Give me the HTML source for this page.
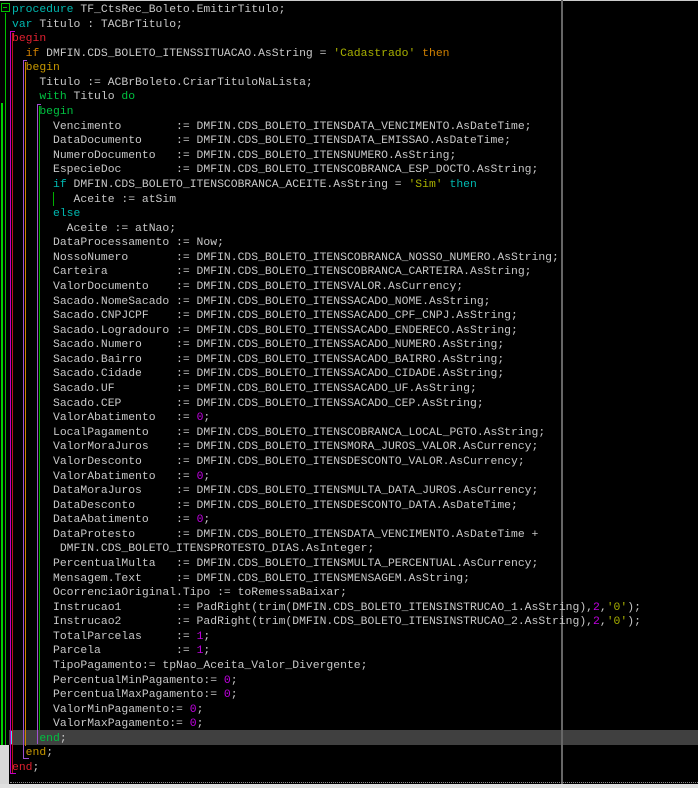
<!DOCTYPE html>
<html><head><meta charset="utf-8"><style>
html,body{margin:0;padding:0;background:#000;width:698px;height:788px;overflow:hidden;position:relative}
pre{position:absolute;left:12px;top:3px;margin:0;font-family:"Liberation Mono","Courier New",monospace;font-size:11.4px;line-height:14.58px;color:#c8c8c8;white-space:pre}
.k{color:#00b8b0}.r{color:#e02030}.o{color:#d08000}.y{color:#c89800}.g{color:#00c040}
.s{color:#a8b000}.n{color:#c000e0}
.v{position:absolute;width:1px}
</style></head><body>
<div style="position:absolute;left:0;top:0;width:698px;height:1px;background:#ccc"></div>
<div style="position:absolute;left:9px;top:730px;width:689px;height:15px;background:#404040"></div>
<div style="position:absolute;left:10px;top:731px;width:2px;height:13px;background:#40e0f0"></div>
<div style="position:absolute;left:561px;top:0;width:2px;height:784px;background:#666"></div>
<div style="position:absolute;left:0;top:745px;width:9px;height:40px;background:#d8d8d8"></div>
<div style="position:absolute;left:0;top:784px;width:698px;height:4px;background:#e0e0e0"></div>
<div style="position:absolute;left:10px;top:782px;width:688px;height:1px;border-top:1px dotted #888"></div>
<div style="position:absolute;left:1px;top:3px;width:7px;height:7px;border:1px solid #00c000"></div>
<div style="position:absolute;left:3px;top:7px;width:4px;height:1px;background:#00c000"></div>
<div class="v" style="left:5px;top:13px;height:732px;background:#00c000"></div>
<div class="v" style="left:1px;top:103px;height:642px;background:#00d000;width:2px"></div>
<div class="v" style="left:10px;top:31px;height:742px;background:#c000c0"></div>
<div style="position:absolute;left:10px;top:31px;width:5px;height:1px;background:#c000c0"></div>
<div style="position:absolute;left:10px;top:773px;width:6px;height:1px;background:#c000c0"></div>
<div class="v" style="left:12px;top:33px;height:740px;background:#c01020"></div>
<div class="v" style="left:23px;top:60px;height:698px;background:#a050d0"></div>
<div style="position:absolute;left:23px;top:60px;width:4px;height:1px;background:#a050d0"></div>
<div style="position:absolute;left:23px;top:758px;width:6px;height:1px;background:#a050d0"></div>
<div class="v" style="left:25px;top:62px;height:684px;background:#d08000"></div>
<div class="v" style="left:37px;top:104px;height:640px;background:#a050d0"></div>
<div style="position:absolute;left:37px;top:104px;width:4px;height:1px;background:#a050d0"></div>
<div class="v" style="left:39px;top:106px;height:624px;background:#00b000"></div>
<div class="v" style="left:53px;top:192px;height:14px;background:#00b000"></div>
<pre><span class="k">procedure</span> TF_CtsRec_Boleto.EmitirTitulo;
<span class="k">var</span> Titulo : TACBrTitulo;
<span class="r">begin</span>
  <span class="o">if</span> DMFIN.CDS_BOLETO_ITENSSITUACAO.AsString = <span class="s">'Cadastrado'</span> <span class="o">then</span>
  <span class="y">begin</span>
    Titulo := ACBrBoleto.CriarTituloNaLista;
    <span class="g">with</span> Titulo <span class="g">do</span>
    <span class="g">begin</span>
      Vencimento        := DMFIN.CDS_BOLETO_ITENSDATA_VENCIMENTO.AsDateTime;
      DataDocumento     := DMFIN.CDS_BOLETO_ITENSDATA_EMISSAO.AsDateTime;
      NumeroDocumento   := DMFIN.CDS_BOLETO_ITENSNUMERO.AsString;
      EspecieDoc        := DMFIN.CDS_BOLETO_ITENSCOBRANCA_ESP_DOCTO.AsString;
      <span class="k">if</span> DMFIN.CDS_BOLETO_ITENSCOBRANCA_ACEITE.AsString = <span class="s">'Sim'</span> <span class="k">then</span>
         Aceite := atSim
      <span class="k">else</span>
        Aceite := atNao;
      DataProcessamento := Now;
      NossoNumero       := DMFIN.CDS_BOLETO_ITENSCOBRANCA_NOSSO_NUMERO.AsString;
      Carteira          := DMFIN.CDS_BOLETO_ITENSCOBRANCA_CARTEIRA.AsString;
      ValorDocumento    := DMFIN.CDS_BOLETO_ITENSVALOR.AsCurrency;
      Sacado.NomeSacado := DMFIN.CDS_BOLETO_ITENSSACADO_NOME.AsString;
      Sacado.CNPJCPF    := DMFIN.CDS_BOLETO_ITENSSACADO_CPF_CNPJ.AsString;
      Sacado.Logradouro := DMFIN.CDS_BOLETO_ITENSSACADO_ENDERECO.AsString;
      Sacado.Numero     := DMFIN.CDS_BOLETO_ITENSSACADO_NUMERO.AsString;
      Sacado.Bairro     := DMFIN.CDS_BOLETO_ITENSSACADO_BAIRRO.AsString;
      Sacado.Cidade     := DMFIN.CDS_BOLETO_ITENSSACADO_CIDADE.AsString;
      Sacado.UF         := DMFIN.CDS_BOLETO_ITENSSACADO_UF.AsString;
      Sacado.CEP        := DMFIN.CDS_BOLETO_ITENSSACADO_CEP.AsString;
      ValorAbatimento   := <span class="n">0</span>;
      LocalPagamento    := DMFIN.CDS_BOLETO_ITENSCOBRANCA_LOCAL_PGTO.AsString;
      ValorMoraJuros    := DMFIN.CDS_BOLETO_ITENSMORA_JUROS_VALOR.AsCurrency;
      ValorDesconto     := DMFIN.CDS_BOLETO_ITENSDESCONTO_VALOR.AsCurrency;
      ValorAbatimento   := <span class="n">0</span>;
      DataMoraJuros     := DMFIN.CDS_BOLETO_ITENSMULTA_DATA_JUROS.AsCurrency;
      DataDesconto      := DMFIN.CDS_BOLETO_ITENSDESCONTO_DATA.AsDateTime;
      DataAbatimento    := <span class="n">0</span>;
      DataProtesto      := DMFIN.CDS_BOLETO_ITENSDATA_VENCIMENTO.AsDateTime +
       DMFIN.CDS_BOLETO_ITENSPROTESTO_DIAS.AsInteger;
      PercentualMulta   := DMFIN.CDS_BOLETO_ITENSMULTA_PERCENTUAL.AsCurrency;
      Mensagem.Text     := DMFIN.CDS_BOLETO_ITENSMENSAGEM.AsString;
      OcorrenciaOriginal.Tipo := toRemessaBaixar;
      Instrucao1        := PadRight(trim(DMFIN.CDS_BOLETO_ITENSINSTRUCAO_1.AsString),<span class="n">2</span>,<span class="s">'0'</span>);
      Instrucao2        := PadRight(trim(DMFIN.CDS_BOLETO_ITENSINSTRUCAO_2.AsString),<span class="n">2</span>,<span class="s">'0'</span>);
      TotalParcelas     := <span class="n">1</span>;
      Parcela           := <span class="n">1</span>;
      TipoPagamento:= tpNao_Aceita_Valor_Divergente;
      PercentualMinPagamento:= <span class="n">0</span>;
      PercentualMaxPagamento:= <span class="n">0</span>;
      ValorMinPagamento:= <span class="n">0</span>;
      ValorMaxPagamento:= <span class="n">0</span>;
    <span class="g">end</span>;
  <span class="y">end</span>;
<span class="r">end</span>;</pre>
</body></html>
